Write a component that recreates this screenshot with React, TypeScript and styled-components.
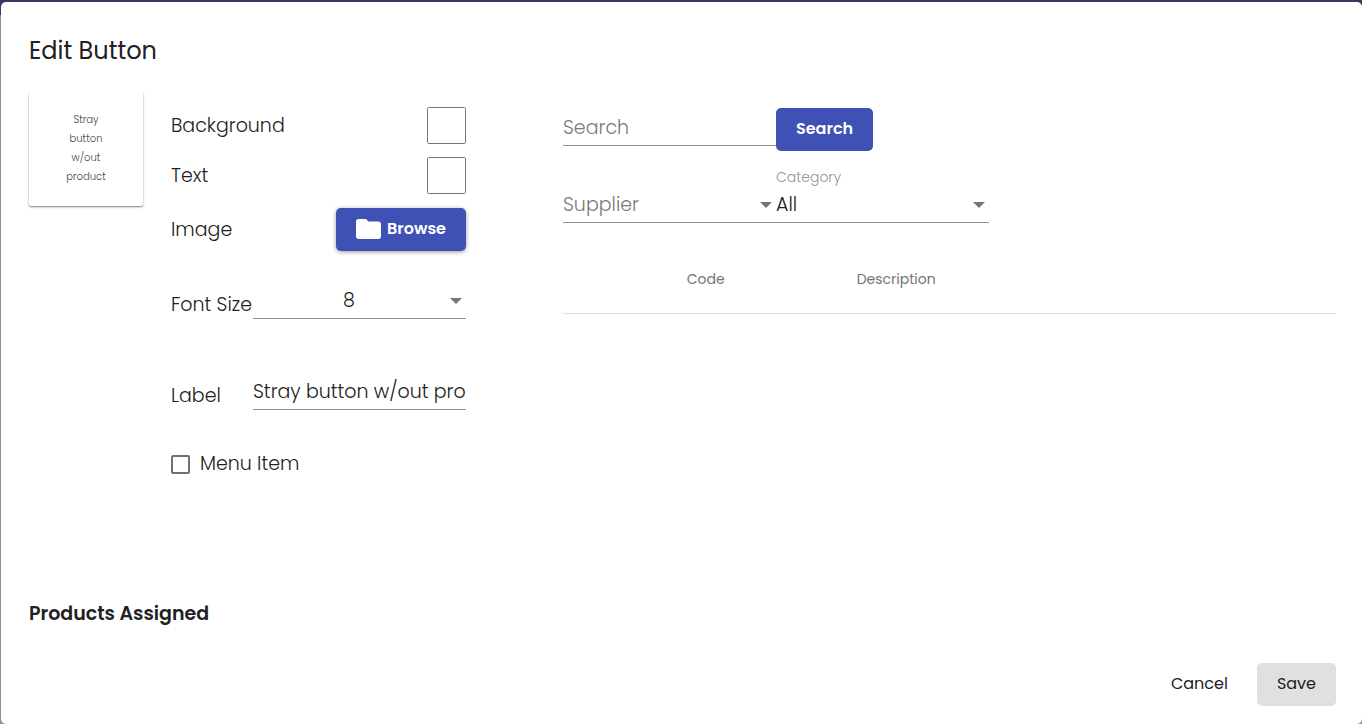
import React from "react";
import styled, { createGlobalStyle, css } from "styled-components";

const INK = "#212121";
const MUTED = "#7a7a7a";
const LINE = "#949494";
const PRIMARY = "#3f51b5";

const GlobalStyle = createGlobalStyle`
  *, *::before, *::after { box-sizing: border-box; }
  body {
    margin: 0;
    background: linear-gradient(#3b3663 0 15px, #8f8f8f 15px);
    color: ${INK};
    font-family: Poppins, Inter, "Open Sans", sans-serif;
    font-size: 19px;
    font-weight: 300;
    line-height: 28px;
  }
  button, input, select { font: inherit; color: inherit; }
`;

const Dialog = styled.main`
  display: flex;
  flex-direction: column;
  min-height: calc(100vh - 2px);
  margin: 2px 0 0 1px;
  padding: 33px 26px 18px 28px;
  border-radius: 5px;
  background: #fff;
`;

const Title = styled.h1`
  margin: 0 0 25px;
  font-size: 24px;
  font-weight: 400;
  line-height: 32px;
`;

const Content = styled.div`
  display: grid;
  grid-template-columns: minmax(0, 437px) minmax(0, 1fr);
  column-gap: 97px;
`;

const Editor = styled.section`
  display: grid;
  grid-template-columns: 114px minmax(0, 1fr);
  column-gap: 28px;
  align-items: start;
`;

const Preview = styled.div`
  display: flex;
  align-items: center;
  justify-content: center;
  height: 114px;
  padding: 0 36px 2px;
  border-radius: 2px;
  box-shadow: 0 1px 2px rgba(0, 0, 0, 0.5);
  clip-path: inset(0 -3px -4px -3px);
  color: #444;
  font-size: 10px;
  line-height: 19px;
  text-align: center;
`;

const Fields = styled.form`
  display: flex;
  flex-direction: column;
  padding-top: 15px;
`;

const Row = styled.div<{ $gap?: number }>`
  display: flex;
  align-items: center;
  justify-content: space-between;
  margin-bottom: ${(p) => p.$gap ?? 0}px;
`;

const FieldRow = styled.div<{ $gap: number }>`
  display: grid;
  grid-template-columns: 82px minmax(0, 1fr);
  align-items: end;
  margin-bottom: ${(p) => p.$gap}px;
`;

const FieldLabel = styled.label`
  white-space: nowrap;
`;

const Swatch = styled.input`
  appearance: none;
  width: 39px;
  height: 37px;
  padding: 0;
  border: 1px solid #767676;
  border-radius: 2px;
  background: #fff;
  &::-webkit-color-swatch-wrapper { padding: 0; }
  &::-webkit-color-swatch { border: 0; }
`;

const underlined = css`
  display: block;
  width: 100%;
  height: 38px;
  padding: 2px 0 0;
  border: 0;
  border-bottom: 1px solid ${LINE};
  border-radius: 0;
  outline: 0;
  background: transparent;
`;

const TextInput = styled.input`
  ${underlined}
  &::placeholder { color: ${MUTED}; opacity: 1; }
`;

const SelectBox = styled.div`
  display: grid;
  align-items: center;
  > * { grid-area: 1 / 1; }
  svg {
    justify-self: end;
    margin: 2px 4px 0 0;
    pointer-events: none;
  }
`;

const Select = styled.select<{ $centered?: boolean; $muted?: boolean }>`
  ${underlined}
  appearance: none;
  padding-right: 21px;
  color: ${(p) => (p.$muted ? MUTED : INK)};
  text-align-last: ${(p) => (p.$centered ? "center" : "left")};
`;

const Button = styled.button<{ $kind?: "primary" | "grey"; $raised?: boolean }>`
  display: inline-flex;
  align-items: center;
  justify-content: center;
  gap: 6px;
  height: 43px;
  padding: 0 20px 2px;
  border: 0;
  border-radius: 5px;
  background: ${(p) =>
    p.$kind === "primary" ? PRIMARY : p.$kind === "grey" ? "#e0e0e0" : "transparent"};
  color: ${(p) => (p.$kind === "primary" ? "#fff" : INK)};
  box-shadow: ${(p) => (p.$raised ? "0 1px 4px rgba(0, 0, 0, 0.4)" : "none")};
  font-size: 16px;
  font-weight: ${(p) => (p.$kind === "primary" ? 600 : 400)};
`;

const CheckLabel = styled.label`
  display: flex;
  align-items: center;
  gap: 10px;
`;

const Checkbox = styled.input`
  appearance: none;
  width: 19px;
  height: 19px;
  margin: 0;
  border: 2px solid #707070;
  border-radius: 2px;
  background: #fff;
  &:checked { background: ${PRIMARY}; }
`;

const Products = styled.section`
  padding-top: 16px;
`;

const SearchRow = styled.form`
  display: grid;
  grid-template-columns: minmax(0, 213px) auto;
  justify-content: start;
  align-items: start;
`;

const Filters = styled.div`
  display: grid;
  grid-template-columns: repeat(2, minmax(0, 213px));
  align-items: end;
  margin-top: 18px;
`;

const FloatingLabel = styled.label`
  display: block;
  color: #959595;
  font-size: 14px;
  line-height: 16px;
`;

const Table = styled.table`
  width: 100%;
  margin-top: 35px;
  border-collapse: collapse;
  table-layout: fixed;
`;

const HeaderCell = styled.th<{ $width?: string }>`
  width: ${(p) => p.$width ?? "auto"};
  height: 55px;
  padding: 0 0 13px;
  border-bottom: 1px solid #e0e0e0;
  color: #757575;
  font-size: 14px;
  font-weight: 400;
  text-align: left;
`;

const Assigned = styled.h2`
  margin: 122px 0 35px;
  font-size: 19px;
  font-weight: 600;
  line-height: 28px;
`;

const Actions = styled.footer`
  display: flex;
  justify-content: flex-end;
  gap: 9px;
  margin-top: auto;
`;

const Arrow = () => (
  <svg width="12" height="6" viewBox="0 0 12 6" aria-hidden="true">
    <path d="M0 0h12L6 6z" fill="#757575" />
  </svg>
);

const Folder = () => (
  <svg width="25" height="20" viewBox="2 4 20 16" aria-hidden="true">
    <path
      d="M10 4H4c-1.1 0-1.99.9-1.99 2L2 18c0 1.1.9 2 2 2h16c1.1 0 2-.9 2-2V8c0-1.1-.9-2-2-2h-8l-2-2z"
      fill="currentColor"
    />
  </svg>
);

export default function App() {
  return (
    <>
      <GlobalStyle />
      <Dialog>
        <Title>Edit Button</Title>
        <Content>
          <Editor>
            <Preview>Stray button w/out product</Preview>
            <Fields>
              <Row $gap={13}>
                <FieldLabel htmlFor="background">Background</FieldLabel>
                <Swatch id="background" type="color" defaultValue="#ffffff" />
              </Row>
              <Row $gap={14}>
                <FieldLabel htmlFor="text">Text</FieldLabel>
                <Swatch id="text" type="color" defaultValue="#ffffff" />
              </Row>
              <Row $gap={30}>
                <span>Image</span>
                <Button type="button" $kind="primary" $raised>
                  <Folder />
                  Browse
                </Button>
              </Row>
              <FieldRow $gap={53}>
                <FieldLabel htmlFor="size">Font Size</FieldLabel>
                <SelectBox>
                  <Select id="size" $centered defaultValue="8">
                    <option>8</option>
                    <option>10</option>
                    <option>12</option>
                  </Select>
                  <Arrow />
                </SelectBox>
              </FieldRow>
              <FieldRow $gap={40}>
                <FieldLabel htmlFor="label">Label</FieldLabel>
                <TextInput id="label" defaultValue="Stray button w/out product" />
              </FieldRow>
              <CheckLabel>
                <Checkbox type="checkbox" />
                Menu Item
              </CheckLabel>
            </Fields>
          </Editor>
          <Products>
            <SearchRow>
              <TextInput type="text" placeholder="Search" aria-label="Search" />
              <Button type="button" $kind="primary">
                Search
              </Button>
            </SearchRow>
            <Filters>
              <SelectBox>
                <Select aria-label="Supplier" $muted defaultValue="Supplier">
                  <option>Supplier</option>
                </Select>
                <Arrow />
              </SelectBox>
              <div>
                <FloatingLabel htmlFor="category">Category</FloatingLabel>
                <SelectBox>
                  <Select id="category" defaultValue="All">
                    <option>All</option>
                  </Select>
                  <Arrow />
                </SelectBox>
              </div>
            </Filters>
            <Table>
              <thead>
                <tr>
                  <HeaderCell $width="16%" aria-label="Select" />
                  <HeaderCell $width="22%">Code</HeaderCell>
                  <HeaderCell>Description</HeaderCell>
                </tr>
              </thead>
            </Table>
          </Products>
        </Content>
        <Assigned>Products Assigned</Assigned>
        <Actions>
          <Button type="button">Cancel</Button>
          <Button type="button" $kind="grey">
            Save
          </Button>
        </Actions>
      </Dialog>
    </>
  );
}
